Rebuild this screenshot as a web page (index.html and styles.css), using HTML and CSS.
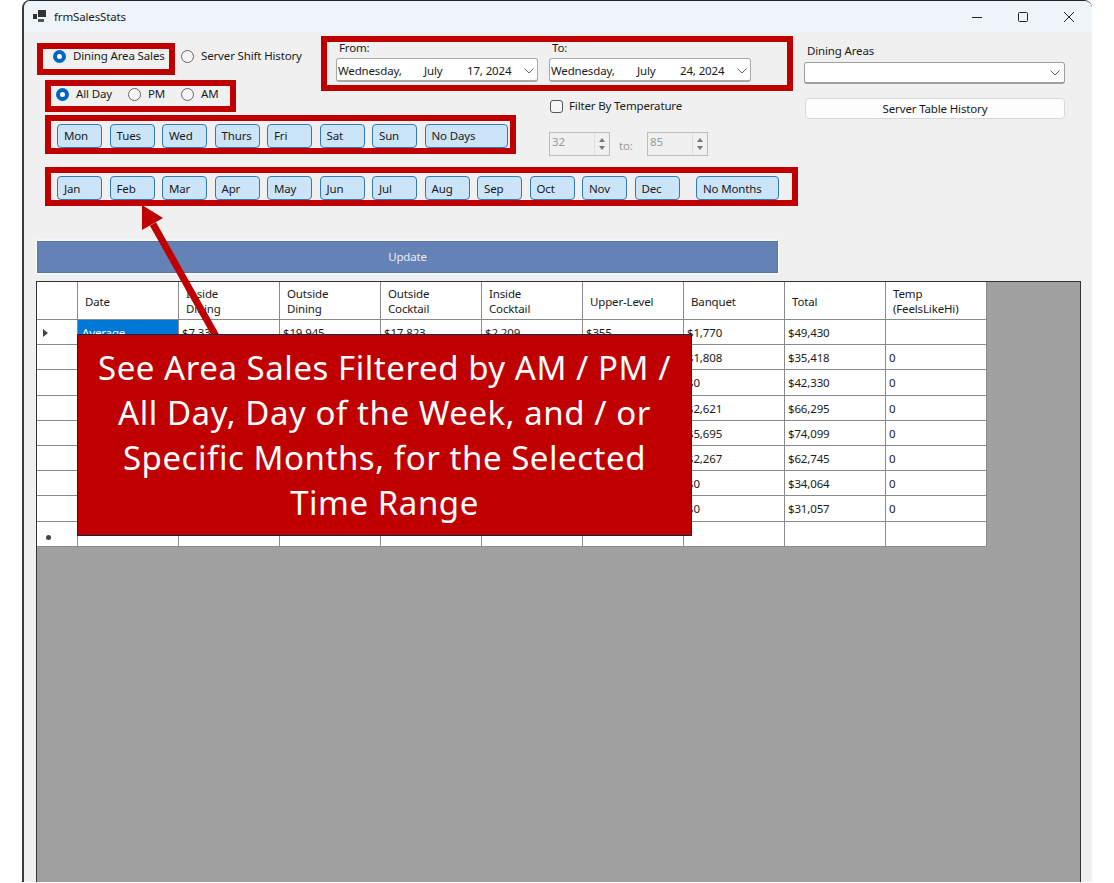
FILE: index.html
```html
<!DOCTYPE html>
<html lang="en">
<head>
<meta charset="utf-8">
<title>frmSalesStats</title>
<link rel="stylesheet" href="styles.css">
</head>
<body>
<div class="window">
  <header class="titlebar">
    <svg class="app-icon" width="14" height="13" viewBox="0 0 14 13"><rect x="0" y="4" width="4" height="5" fill="#333"/><rect x="5" y="0" width="8" height="7" fill="#333"/><rect x="5" y="9" width="6" height="3" fill="#555"/></svg>
    <span class="title">frmSalesStats</span>
    <div class="caption">
      <span class="cap-btn"><svg width="12" height="12" viewBox="0 0 12 12"><path d="M1 6.5h10" stroke="#222" fill="none"/></svg></span>
      <span class="cap-btn"><svg width="12" height="12" viewBox="0 0 12 12"><rect x="1.5" y="1.5" width="9" height="9" rx="1" stroke="#222" fill="none"/></svg></span>
      <span class="cap-btn"><svg width="12" height="12" viewBox="0 0 12 12"><path d="M1 1l10 10M11 1L1 11" stroke="#222" fill="none"/></svg></span>
    </div>
  </header>

  <section class="controls">
    <div class="main-col">
      <div class="top-grid">
        <div class="radios">
          <div class="radio-row">
            <div class="frame frame-mode"><label class="radio"><span class="dot on"></span>Dining Area Sales</label></div>
            <label class="radio server"><span class="dot"></span>Server Shift History</label>
          </div>
          <div class="frame frame-time">
            <label class="radio r-all"><span class="dot on"></span>All Day</label>
            <label class="radio r-pm"><span class="dot"></span>PM</label>
            <label class="radio r-am"><span class="dot"></span>AM</label>
          </div>
        </div>

        <div class="frame frame-dates">
          <div class="date-col">
            <span class="date-label">From:</span>
            <div class="date-field"><span class="d-day">Wednesday,</span><span class="d-month">July</span><span class="d-year">17, 2024</span>
              <svg class="chev" width="10" height="6" viewBox="0 0 10 6"><path d="M0.5 0.5L5 5l4.5-4.5" stroke="#666" fill="none"/></svg></div>
          </div>
          <div class="date-col">
            <span class="date-label">To:</span>
            <div class="date-field"><span class="d-day">Wednesday,</span><span class="d-month">July</span><span class="d-year">24, 2024</span>
              <svg class="chev" width="10" height="6" viewBox="0 0 10 6"><path d="M0.5 0.5L5 5l4.5-4.5" stroke="#666" fill="none"/></svg></div>
          </div>
        </div>

        <div class="frame frame-days">
          <button class="tog">Mon</button><button class="tog">Tues</button><button class="tog">Wed</button><button class="tog">Thurs</button><button class="tog">Fri</button><button class="tog">Sat</button><button class="tog">Sun</button><button class="tog tog-wide">No Days</button>
        </div>

        <div class="filter">
          <label class="check"><span class="box"></span>Filter By Temperature</label>
          <div class="spin-row">
            <div class="spin"><span>32</span><span class="arrows"><i class="up"></i><i class="down"></i></span></div>
            <span class="spin-to">to:</span>
            <div class="spin"><span>85</span><span class="arrows"><i class="up"></i><i class="down"></i></span></div>
          </div>
        </div>
      </div>

      <div class="frame frame-months">
        <button class="tog">Jan</button><button class="tog">Feb</button><button class="tog">Mar</button><button class="tog">Apr</button><button class="tog">May</button><button class="tog">Jun</button><button class="tog">Jul</button><button class="tog">Aug</button><button class="tog">Sep</button><button class="tog">Oct</button><button class="tog">Nov</button><button class="tog">Dec</button><button class="tog tog-wide tog-nomonths">No Months</button>
      </div>
    </div>

    <aside class="side">
      <span class="side-label">Dining Areas</span>
      <div class="combo"><svg width="10" height="6" viewBox="0 0 10 6"><path d="M0.5 0.5L5 5l4.5-4.5" stroke="#666" fill="none"/></svg></div>
      <button class="plain">Server Table History</button>
    </aside>
  </section>

  <button class="update">Update</button>

  <div class="datagrid">
    <div class="sheet">
      <div class="c hd"></div><div class="c hd">Date</div><div class="c hd">Inside<br>Dining</div><div class="c hd">Outside<br>Dining</div><div class="c hd">Outside<br>Cocktail</div><div class="c hd">Inside<br>Cocktail</div><div class="c hd">Upper-Level</div><div class="c hd">Banquet</div><div class="c hd">Total</div><div class="c hd">Temp<br>(FeelsLikeHi)</div>

      <div class="c rh"><i class="tri"></i></div><div class="c sel">Average</div><div class="c">$7,332</div><div class="c">$19,945</div><div class="c">$17,823</div><div class="c">$2,209</div><div class="c">$355</div><div class="c">$1,770</div><div class="c">$49,430</div><div class="c"></div>
      <div class="c rh"></div><div class="c"></div><div class="c"></div><div class="c"></div><div class="c"></div><div class="c"></div><div class="c"></div><div class="c">$1,808</div><div class="c">$35,418</div><div class="c">0</div>
      <div class="c rh"></div><div class="c"></div><div class="c"></div><div class="c"></div><div class="c"></div><div class="c"></div><div class="c"></div><div class="c">$0</div><div class="c">$42,330</div><div class="c">0</div>
      <div class="c rh"></div><div class="c"></div><div class="c"></div><div class="c"></div><div class="c"></div><div class="c"></div><div class="c"></div><div class="c">$2,621</div><div class="c">$66,295</div><div class="c">0</div>
      <div class="c rh"></div><div class="c"></div><div class="c"></div><div class="c"></div><div class="c"></div><div class="c"></div><div class="c"></div><div class="c">$5,695</div><div class="c">$74,099</div><div class="c">0</div>
      <div class="c rh"></div><div class="c"></div><div class="c"></div><div class="c"></div><div class="c"></div><div class="c"></div><div class="c"></div><div class="c">$2,267</div><div class="c">$62,745</div><div class="c">0</div>
      <div class="c rh"></div><div class="c"></div><div class="c"></div><div class="c"></div><div class="c"></div><div class="c"></div><div class="c"></div><div class="c">$0</div><div class="c">$34,064</div><div class="c">0</div>
      <div class="c rh"></div><div class="c"></div><div class="c"></div><div class="c"></div><div class="c"></div><div class="c"></div><div class="c"></div><div class="c">$0</div><div class="c">$31,057</div><div class="c">0</div>
      <div class="c rh"><i class="star"></i></div><div class="c"></div><div class="c"></div><div class="c"></div><div class="c"></div><div class="c"></div><div class="c"></div><div class="c"></div><div class="c"></div><div class="c"></div>
    </div>
  </div>

  <svg class="arrow" width="110" height="150" viewBox="0 0 110 150"><path d="M87 135L23 21" stroke="#c00000" stroke-width="7" fill="none"/><path d="M12 2L33 15 12 27z" fill="#c00000"/></svg>

  <div class="callout">See Area Sales Filtered by AM / PM / All Day, Day of the Week, and / or Specific Months, for the Selected Time Range</div>
</div>
</body>
</html>
```

FILE: styles.css
```css
* { box-sizing: border-box; }
html, body { margin: 0; height: 100%; overflow: hidden; background: #fff; }
body { font: 11.5px/16px "Noto Sans", "Open Sans", sans-serif; letter-spacing: -0.15px; color: #1a1a1a; }

.window {
  position: relative;
  display: flex;
  flex-direction: column;
  width: 1070px;
  height: 882px;
  margin-left: 22px;
  background: #f0f0f0;
  border-left: 2px solid #3a3a3a;
  border-top: 1px solid #222;
  border-top-left-radius: 8px;
  border-top-right-radius: 8px;
  overflow: hidden;
}

.titlebar {
  display: flex;
  align-items: center;
  flex: none;
  height: 31px;
  padding-left: 9px;
  background: #eff4fb;
}
.app-icon { margin-right: 7px; }
.caption { display: flex; margin-left: auto; }
.cap-btn { display: flex; align-items: center; justify-content: center; width: 46px; height: 31px; }

.controls { display: flex; flex: none; padding: 4px 0 0 13px; }
.main-col { width: 767px; flex: none; }

.top-grid {
  display: grid;
  grid-template-columns: 284px 229px 254px;
  grid-template-rows: 55px 24px 39px;
  grid-template-areas:
    "radios dates dates"
    "radios . filter"
    "days days filter";
}

.frame { border: 6px solid #c00000; }

.radios { grid-area: radios; padding-top: 7px; }
.radio-row { display: flex; align-items: center; }
.radio { display: flex; align-items: center; white-space: nowrap; }
.dot {
  flex: none;
  width: 13px;
  height: 13px;
  margin-right: 7px;
  border: 1px solid #666;
  border-radius: 50%;
  background: #f6f6f6;
}
.dot.on { border: 4px solid #0067c0; background: #fff; }

.frame-mode { display: flex; align-items: center; width: 138px; height: 32px; padding: 0 0 6px 10px; }
.server { margin: 0 0 6px 6px; }

.frame-time { display: flex; align-items: center; width: 191px; height: 32px; margin: 5px 0 0 8px; padding: 0 0 4px 5px; }
.r-all { width: 72px; }
.r-pm { width: 53px; }

.frame-dates { grid-area: dates; display: flex; gap: 11px; width: 472px; padding-left: 9px; }
.date-col { display: flex; flex-direction: column; width: 202px; }
.date-label { height: 17px; margin-top: -1px; padding-left: 3px; line-height: 14px; }
.date-field {
  display: flex;
  align-items: center;
  height: 24px;
  padding: 2px 0 0 1px;
  background: #fff;
  border: 1px solid #a8a8a8;
  border-bottom-width: 2px;
  border-radius: 3px;
}
.d-day { width: 86px; }
.d-month { width: 43px; }
.d-year { width: 57px; }
.chev { flex: none; }

.frame-days {
  grid-area: days;
  display: flex;
  gap: 7.5px;
  width: 471px;
  margin-left: 8px;
  padding: 3px 0 0 6px;
}
.tog {
  flex: none;
  width: 45px;
  height: 23.5px;
  padding: 0 0 0 6px;
  text-align: left;
  font: inherit;
  letter-spacing: inherit;
  color: inherit;
  background: #cce4f7;
  border: 1.5px solid #2f7ab8;
  border-radius: 4px;
}
.tog-wide { width: 83px; }

.frame-months {
  display: flex;
  gap: 7.5px;
  width: 753px;
  height: 39px;
  margin: 13px 0 0 8px;
  padding: 3px 0 0 6px;
}
.frame-months .tog { height: 24px; padding-top: 1px; }
.tog-nomonths { margin-left: 9px; }

.filter { grid-area: filter; height: 65px; padding-top: 8px; }
.check { display: flex; align-items: center; height: 14px; }
.box {
  width: 13px;
  height: 13px;
  margin-right: 6px;
  background: #f6f6f6;
  border: 1px solid #555;
  border-radius: 3px;
}
.spin-row { display: flex; align-items: center; margin: 19px 0 0 -1px; color: #9a9a9a; }
.spin {
  display: flex;
  justify-content: space-between;
  width: 61px;
  height: 24px;
  padding-left: 2px;
  background: #f0f0f0;
  border: 1.5px solid #bcbcbc;
  line-height: 18px;
}
.spin-to { width: 37px; padding-left: 9px; margin-top: 4px; }
.arrows { display: flex; flex-direction: column; align-items: center; gap: 4px; justify-content: center; width: 15px; border-left: 1px solid #ddd; }
.arrows i { width: 0; height: 0; border: 3px solid transparent; }
.arrows .up { border-top: 0; border-bottom: 4px solid #777; }
.arrows .down { border-bottom: 0; border-top: 4px solid #777; }

.side { display: flex; flex-direction: column; flex: none; width: 262px; padding-top: 7px; }
.side-label { height: 19px; padding-left: 3px; }
.combo {
  display: flex;
  align-items: center;
  justify-content: flex-end;
  width: 261px;
  height: 22px;
  padding-right: 4px;
  background: #fff;
  border: 1px solid #a0a0a0;
  border-bottom-width: 2px;
  border-radius: 3px;
}
.plain {
  width: 260px;
  height: 21px;
  margin: 14px 0 0 1px;
  padding: 0;
  font: inherit;
  letter-spacing: inherit;
  color: inherit;
  background: #fdfdfd;
  border: 1px solid #d8d8d8;
  border-radius: 4px;
}

.update {
  flex: none;
  width: 741px;
  height: 32px;
  margin: 35px 0 0 13px;
  padding: 0;
  font: inherit;
  letter-spacing: inherit;
  color: #e8ecf5;
  background: #6482b5;
  border: 1px solid #5876a8;
  box-shadow: 0 0 0 1.5px #fafafa;
}

.datagrid {
  flex: 1;
  width: 1045px;
  margin: 8px 0 0 12px;
  background: #a0a0a0;
  border: solid #333;
  border-width: 1px 1px 0 1px;
  overflow: hidden;
}
.sheet {
  display: grid;
  grid-template-columns: 41px repeat(9, 101px);
  grid-template-rows: 38px repeat(9, 25.2px);
  width: max-content;
}
.c {
  display: flex;
  align-items: center;
  padding: 2px 0 0 3px;
  background: #fff;
  border-right: 1.5px solid #8a8a8a;
  border-bottom: 1.5px solid #8a8a8a;
  white-space: nowrap;
}
.hd { padding: 1px 0 0 7px; line-height: 15px; }
.rh { padding: 2px 0 0 6px; }
.sel { background: #0078d7; color: #fff; padding-left: 4px; }
.tri { width: 0; height: 0; border-left: 5px solid #444; border-top: 4.5px solid transparent; border-bottom: 4.5px solid transparent; }
.star { width: 5px; height: 5px; margin: 5px 0 0 3px; border-radius: 50%; background: #444; }

.arrow { position: absolute; left: 106px; top: 202px; }

.callout {
  position: absolute;
  left: 53px;
  top: 333px;
  display: flex;
  align-items: center;
  width: 615px;
  height: 202px;
  padding: 0 18px;
  font-size: 33px;
  letter-spacing: 0.55px;
  line-height: 45px;
  text-align: center;
  color: #fff;
  background: #c00000;
  border: 1.5px solid #0e2841;
}
```
